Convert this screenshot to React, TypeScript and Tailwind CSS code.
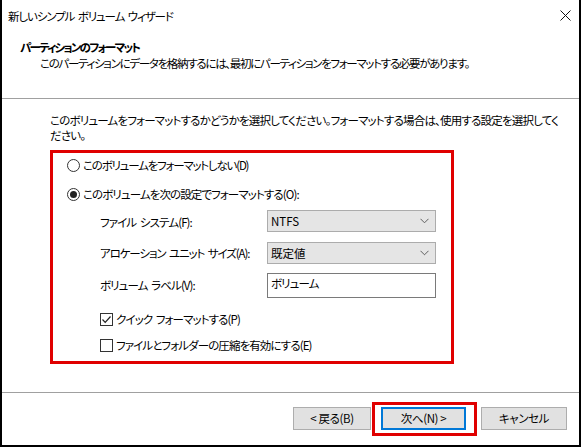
import React from "react";

const font = "font-['Noto_Sans_CJK_JP','Noto_Sans',sans-serif] [font-feature-settings:'palt']";

function Radio({ checked }: { checked?: boolean }) {
  return (
    <span className="w-[13px] h-[13px] rounded-full border border-[#333] bg-white flex items-center justify-center shrink-0">
      {checked && <span className="w-[7px] h-[7px] rounded-full bg-[#222]" />}
    </span>
  );
}

function Check({ checked }: { checked?: boolean }) {
  return (
    <span className="w-[13px] h-[13px] border border-[#333] bg-white flex items-center justify-center shrink-0">
      {checked && (
        <svg width="11" height="11" viewBox="0 0 11 11">
          <path d="M1.5 5.5 L4.2 8.3 L9.5 2.5" fill="none" stroke="#222" strokeWidth="1.2" />
        </svg>
      )}
    </span>
  );
}

function Chevron() {
  return (
    <svg width="9" height="6" viewBox="0 0 9 6">
      <path d="M0.5 0.8 L4.5 4.8 L8.5 0.8" fill="none" stroke="#606060" strokeWidth="1" />
    </svg>
  );
}

export default function App() {
  return (
    <div className={`w-[581px] h-[447px] bg-white border-x-2 border-b-2 border-black flex flex-col text-[11.5px] tracking-[-0.9px] [word-spacing:2px] leading-[15px] text-black whitespace-nowrap ${font}`}>
      {/* title bar */}
      <div className="h-[32px] flex items-center justify-between pl-[6px] pr-[8px] shrink-0">
        <span className="tracking-[-1.1px]">新しいシンプル ボリューム ウィザード</span>
        <svg width="11" height="11" viewBox="0 0 11 11" className="mb-[2px]">
          <path d="M0.5 0.5 L10.5 10.5 M10.5 0.5 L0.5 10.5" stroke="#111" strokeWidth="1" />
        </svg>
      </div>
      {/* header */}
      <div className="h-[66px] shrink-0 pt-[7px] pl-[18px]">
        <div className="font-bold leading-[16px] tracking-[-1.8px]">パーティションのフォーマット</div>
        <div className="pl-[20px] leading-[16px] tracking-[-1.3px]">このパーティションにデータを格納するには、最初にパーティションをフォーマットする必要があります。</div>
      </div>
      <div className="h-px bg-[#a0a0a0] shrink-0" />
      {/* body */}
      <div className="h-[293px] shrink-0 pl-[48px] pt-[14px]">
        <div className="leading-[15px] tracking-[-0.8px]">
          このボリュームをフォーマットするかどうかを選択してください。フォーマットする場合は、使用する設定を選択してく
          <br />
          ださい。
        </div>
        <div className="mt-[7px] w-[404px] h-[214px] border-[3px] border-[#e00000] pl-[14px] pt-[2px] flex flex-col">
          <div className="h-[20px] flex items-center gap-[3px]">
            <Radio />
            <span className="tracking-[-1.2px]">このボリュームをフォーマットしない(D)</span>
          </div>
          <div className="h-[20px] mt-[9px] flex items-center gap-[3px]">
            <Radio checked />
            <span>このボリュームを次の設定でフォーマットする(O):</span>
          </div>
          <div className="mt-[6px] pl-[33px] flex flex-col">
            <div className="h-[22px] flex items-center">
              <span className="w-[167px] pt-[3px]">ファイル システム(F):</span>
              <div className="w-[169px] h-[22px] bg-[#e5e5e5] border border-[#acacac] flex items-center justify-between pl-[3px] pr-[6px] tracking-normal">
                <span>NTFS</span>
                <Chevron />
              </div>
            </div>
            <div className="h-[22px] mt-[10px] flex items-center">
              <span className="w-[167px] pt-[1px] tracking-[-1.1px]">アロケーション ユニット サイズ(A):</span>
              <div className="w-[169px] h-[22px] bg-[#e5e5e5] border border-[#acacac] flex items-center justify-between pl-[3px] pr-[6px]">
                <span className="tracking-[0px]">既定値</span>
                <Chevron />
              </div>
            </div>
            <div className="h-[25px] mt-[9px] flex items-center">
              <span className="w-[167px]">ボリューム ラベル(V):</span>
              <div className="w-[169px] h-[25px] bg-white border border-[#7a7a7a] flex items-center pl-[3px] pb-[4px]">
                <span>ボリューム</span>
              </div>
            </div>
            <div className="h-[20px] mt-[11px] flex items-center gap-[3px]">
              <Check checked />
              <span>クイック フォーマットする(P)</span>
            </div>
            <div className="h-[20px] mt-[6px] flex items-center gap-[3px]">
              <Check />
              <span>ファイルとフォルダーの圧縮を有効にする(E)</span>
            </div>
          </div>
        </div>
      </div>
      <div className="h-px bg-[#a0a0a0] shrink-0" />
      {/* buttons */}
      <div className="flex-1 flex items-center pl-[291px] pb-[1px] tracking-[-0.4px]">
        <button className="w-[78px] h-[23px] bg-[#e1e1e1] border border-[#adadad] flex items-center justify-center">
          &lt; 戻る(B)
        </button>
        <div className="ml-[1px] border-[3px] border-[#e00000] pl-[6px] pr-[8px] pt-[2px] pb-[3px]">
          <button className="w-[85px] h-[23px] bg-[#e1e1e1] border-2 border-[#0078d7] flex items-center justify-center">
            次へ(N) &gt;
          </button>
        </div>
        <button className="ml-[4px] w-[86px] h-[23px] bg-[#e1e1e1] border border-[#adadad] flex items-center justify-center">
          キャンセル
        </button>
      </div>
    </div>
  );
}
